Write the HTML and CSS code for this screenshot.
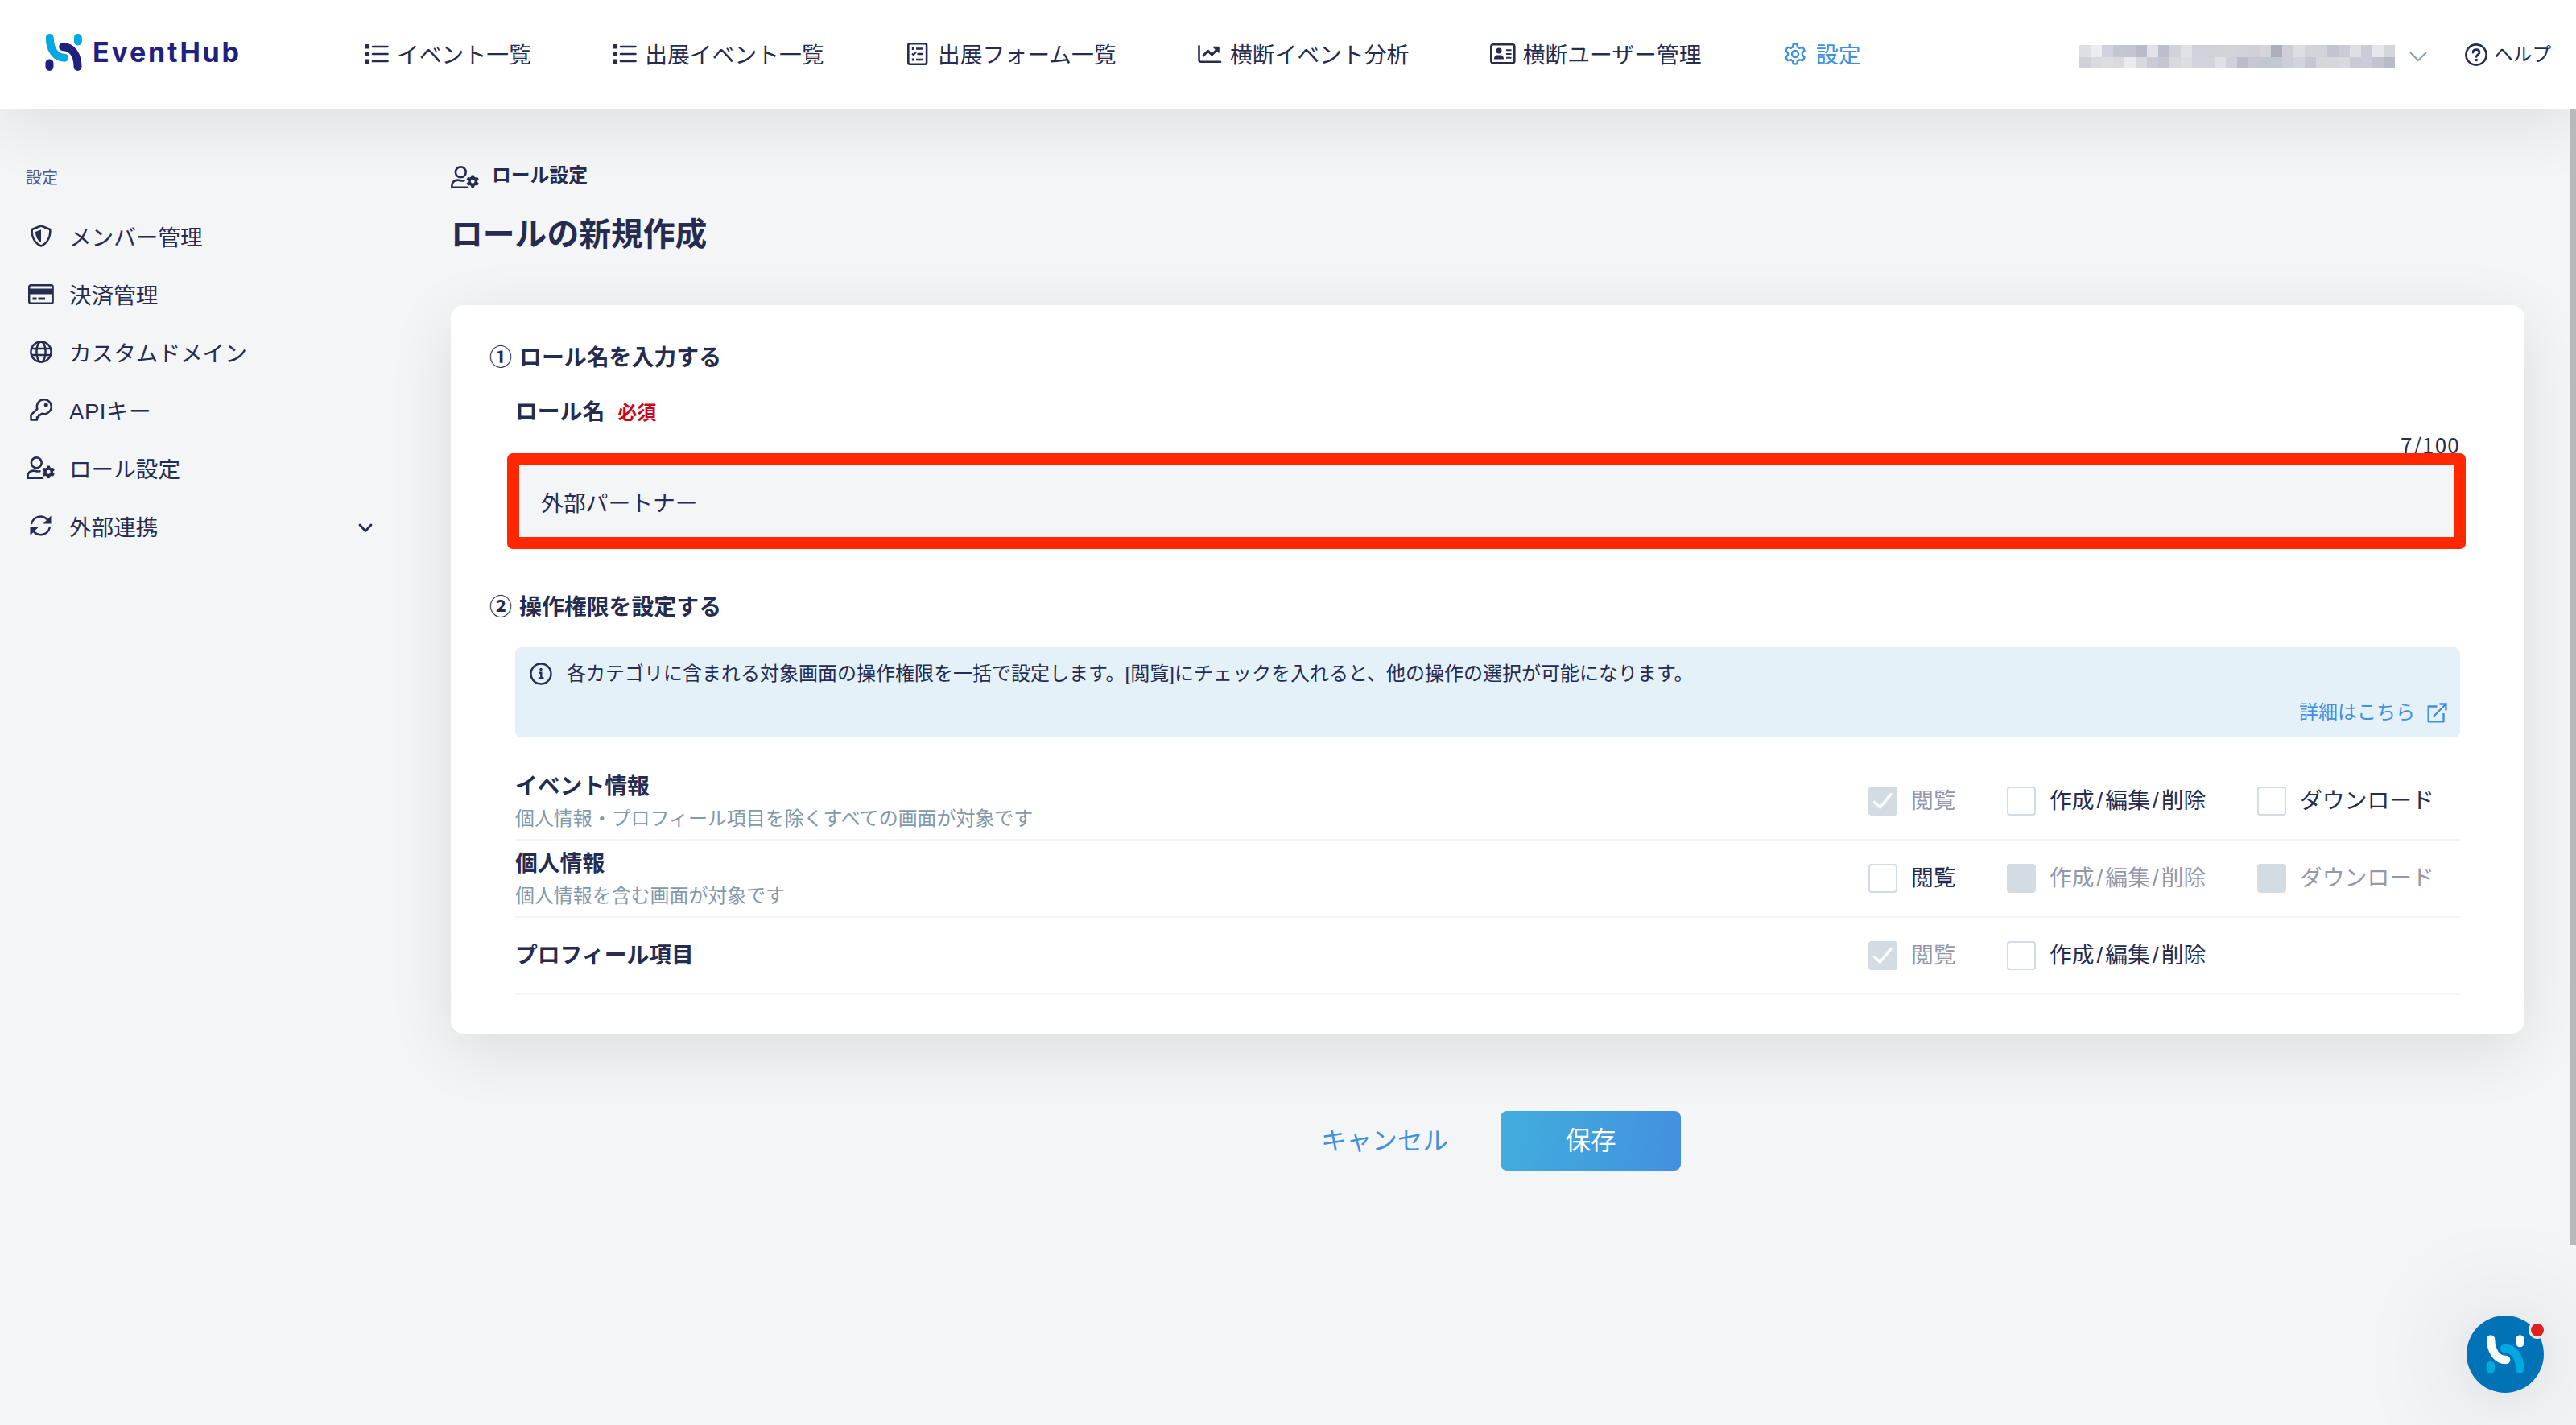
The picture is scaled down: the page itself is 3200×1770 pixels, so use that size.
FILE: index.html
```html
<!DOCTYPE html>
<html lang="ja">

<head>
  <meta charset="UTF-8" />
  <meta name="viewport" content="width=device-width, initial-scale=1.0" />
  <title>ロールの新規作成 - EventHub</title>
  <link rel="stylesheet" href="styles.css">
</head>

<body>
  <!-- shared icons -->
  <svg class="sprite" width="0" height="0">
    <symbol id="gear" viewBox="-20 -20 552 552">
      <path d="M495.9 166.6c3.2 8.7 .5 18.4-6.4 24.6l-43.3 39.4c1.1 8.3 1.7 16.8 1.7 25.4s-.6 17.1-1.7 25.4l43.3 39.4c6.9 6.2 9.6 15.9 6.4 24.6c-4.4 11.9-9.7 23.3-15.8 34.3l-4.7 8.1c-6.6 11-14 21.4-22.1 31.2c-5.9 7.2-15.7 9.6-24.5 6.8l-55.7-17.7c-13.4 10.3-28.2 18.9-44 25.4l-12.5 57.1c-2 9.1-9 16.3-18.2 17.8c-13.8 2.3-28 3.5-42.5 3.5s-28.7-1.2-42.5-3.5c-9.2-1.5-16.2-8.7-18.2-17.8l-12.5-57.1c-15.8-6.5-30.6-15.1-44-25.4L83.1 425.9c-8.8 2.8-18.6 .3-24.5-6.8c-8.1-9.8-15.5-20.2-22.1-31.2l-4.7-8.1c-6.1-11-11.4-22.4-15.8-34.3c-3.2-8.7-.5-18.4 6.4-24.6l43.3-39.4C64.6 273.1 64 264.6 64 256s.6-17.1 1.7-25.4L22.4 191.2c-6.9-6.2-9.6-15.9-6.4-24.6c4.4-11.9 9.7-23.3 15.8-34.3l4.7-8.1c6.6-11 14-21.4 22.1-31.2c5.9-7.2 15.7-9.6 24.5-6.8l55.7 17.7c13.4-10.3 28.2-18.9 44-25.4l12.5-57.1c2-9.1 9-16.3 18.2-17.8C227.3 1.2 241.5 0 256 0s28.7 1.2 42.5 3.5c9.2 1.5 16.2 8.7 18.2 17.8l12.5 57.1c15.8 6.5 30.6 15.1 44 25.4l55.7-17.7c8.8-2.8 18.6-.3 24.5 6.8c8.1 9.8 15.5 20.2 22.1 31.2l4.7 8.1c6.1 11 11.4 22.4 15.8 34.3zM256 336a80 80 0 1 0 0-160 80 80 0 1 0 0 160z" />
    </symbol>
    <symbol id="list" viewBox="0 0 30 24">
      <path d="M0 0h5.500v5.500H0zM0 9.200h5.500v5.500H0zM0 18.500h5.500V24H0z" fill="currentColor" />
      <path d="M10 3h18.500M10 12h18.500M10 21h18.500" stroke="currentColor" stroke-width="2.600" stroke-linecap="round" />
    </symbol>
    <symbol id="user-gear" viewBox="0 0 36 28">
      <g fill="none" stroke="currentColor" stroke-width="2.600" stroke-linecap="round">
        <circle cx="12.300" cy="7.800" r="6.400" />
        <path d="M16.500 18.300C12 19.300 11.500 17.600 8.600 17.600C4.500 17.600 1.400 20.500 1.400 24.500V26.700H20" />
      </g>
      <use href="#gear" x="18.700" y="10.800" width="17" height="17" fill="currentColor" />
    </symbol>
    <symbol id="logo" viewBox="0 0 143 144">
      <g fill="none" stroke-width="31" stroke-linecap="round">
        <path class="logo-a" d="M18 16C18 60 40 93 75 93" />
        <path class="logo-b" d="M69 51C105 51 126 82 126 128" />
        <path class="logo-a" d="M127 16V30" />
        <path class="logo-b" d="M17 114V128" />
      </g>
    </symbol>
  </svg>

  <header>
    <a class="brand" href="#">
      <svg class="brand-mark" width="46" height="48"><use href="#logo" /></svg>
      <span>EventHub</span>
    </a>
    <nav>
      <ul>
        <li><a href="#"><svg width="30" height="24"><use href="#list" /></svg><span>イベント一覧</span></a></li>
        <li><a href="#"><svg width="30" height="24"><use href="#list" /></svg><span>出展イベント一覧</span></a></li>
        <li><a href="#">
          <svg width="26" height="28" viewBox="0 0 26 28" fill="none" stroke="currentColor" stroke-width="2.600">
            <rect x="1.300" y="1.300" width="22.800" height="25.400" rx="2" />
            <path d="M11 7.500h8M12.500 14h6.500M11 21h8" stroke-width="2.400" />
            <path d="M5.800 7.500h3M5.800 21h3" stroke-width="3" />
            <path d="M6 13.500l1.800 1.800 3.200-3.600" stroke-width="2" />
          </svg><span>出展フォーム一覧</span></a></li>
        <li><a href="#">
          <svg width="30" height="22" viewBox="0 0 30 22" fill="none" stroke="currentColor" stroke-width="2.600" stroke-linecap="round" stroke-linejoin="round">
            <path d="M1.500 1.300V18.500Q1.500 20.700 3.700 20.700H28" />
            <path d="M7 13l5.500-6 5 5L25 4.500" stroke-width="3" />
            <path d="M19.500 2.500H26V9z" fill="currentColor" stroke-width="1.500" />
          </svg><span>横断イベント分析</span></a></li>
        <li><a href="#">
          <svg width="32" height="26" viewBox="0 0 32 26" fill="none" stroke="currentColor" stroke-width="2.600">
            <rect x="1.300" y="1.300" width="29" height="23" rx="2.500" />
            <circle cx="11" cy="9" r="3.500" fill="currentColor" stroke="none" />
            <path d="M5 19.500c0-3.500 2-5 4-5h4c2 0 4 1.500 4 5z" fill="currentColor" stroke="none" />
            <path d="M20 8.300h6.500M20 13h6.500M20 17.700h6.500" stroke-width="2" />
          </svg><span>横断ユーザー管理</span></a></li>
        <li><a class="active" href="#">
          <svg width="28" height="28" viewBox="-10 -10 532 532" fill="none" stroke="currentColor" stroke-width="46">
            <path d="M214 24Q256 12 298 24L314 92L362 120L430 100Q464 136 476 182L426 230V282L476 330Q464 376 430 412L362 392L314 420L298 488Q256 500 214 488L198 420L150 392L82 412Q48 376 36 330L86 282V230L36 182Q48 136 82 100L150 120L198 92Z" stroke-linejoin="round" />
            <circle cx="256" cy="256" r="76" />
          </svg><span>設定</span></a></li>
      </ul>
    </nav>
    <div class="account">
      <div class="mosaic" id="mosaic"></div>
      <svg class="caret" width="22" height="12" viewBox="0 0 22 12" fill="none" stroke="currentColor" stroke-width="2"><path d="M1 1l10 10L21 1" /></svg>
    </div>
    <a class="help" href="#">
      <svg width="28" height="28" viewBox="0 0 28 28" fill="none" stroke="currentColor" stroke-width="2.600">
        <circle cx="14" cy="14" r="12.600" />
        <path d="M10 11.200C10 8.500 11.800 7.600 14 7.600C16.400 7.600 18.100 9 18.100 11C18.100 13.600 14.200 13.700 14.200 16.500" stroke-linecap="round" />
        <circle cx="14.200" cy="20.500" r="1.800" fill="currentColor" stroke="none" />
      </svg><span>ヘルプ</span></a>
  </header>

  <div class="layout">
    <aside>
      <p>設定</p>
      <ul>
        <li><a href="#"><i><svg width="28" height="28" viewBox="0 0 28 28" fill="none" stroke="currentColor" stroke-width="2.500" stroke-linejoin="round">
          <path d="M14 1.500L25.300 6C25.800 15 22 23 14 26.500C6 23 2.200 15 2.700 6Z" />
          <path d="M14 6.200V22C9.500 19.500 7 14.500 7 9Z" fill="currentColor" stroke="none" />
        </svg></i><span>メンバー管理</span></a></li>
        <li><a href="#"><i><svg width="32" height="25" viewBox="0 0 32 25" fill="none" stroke="currentColor" stroke-width="2.400">
          <rect x="1.200" y="1.200" width="29.400" height="22.600" rx="2" />
          <path d="M1 5.500h30v7H1z" fill="currentColor" stroke="none" />
          <path d="M5.500 18h5M12.500 18h8.500" stroke-width="3" />
        </svg></i><span>決済管理</span></a></li>
        <li><a href="#"><i><svg width="28" height="28" viewBox="0 0 28 28" fill="none" stroke="currentColor" stroke-width="2.500">
          <circle cx="14" cy="14" r="12.600" />
          <ellipse cx="14" cy="14" rx="5.600" ry="12.600" />
          <path d="M2 10h24M2 18h24" />
        </svg></i><span>カスタムドメイン</span></a></li>
        <li><a href="#"><i><svg width="28" height="28" viewBox="0 0 28 28" fill="none" stroke="currentColor" stroke-width="2.500" stroke-linejoin="round">
          <path d="M9.300 13A9 9 0 1 1 15 18.700L13 20.500H11V23.300H9V26.500H1.500V20.300Z" />
          <circle cx="20.200" cy="8" r="2.500" fill="currentColor" stroke="none" />
        </svg></i><span class="latin">APIキー</span></a></li>
        <li><a href="#"><i><svg width="36" height="28"><use href="#user-gear" /></svg></i><span>ロール設定</span></a></li>
        <li><a href="#"><i><svg width="27" height="26" viewBox="0 0 27 26" fill="none" stroke="currentColor" stroke-width="2.500" stroke-linecap="round">
          <path d="M2.300 10A11.500 11.500 0 0 1 21.500 5M24.700 15.500A11.500 11.500 0 0 1 5.500 20.800" />
          <path d="M26.500 .5V10.500H16.500ZM.5 25V15H10.500Z" fill="currentColor" stroke="none" />
        </svg></i><span>外部連携</span>
          <svg class="chevron" width="18" height="12" viewBox="0 0 18 12" fill="none" stroke="currentColor" stroke-width="2.800" stroke-linecap="round" stroke-linejoin="round"><path d="M2 2l7 7.500L16 2" /></svg></a></li>
      </ul>
    </aside>

    <main>
      <div class="breadcrumb">
        <svg width="36" height="28"><use href="#user-gear" /></svg>
        <span>ロール設定</span>
      </div>
      <h1>ロールの新規作成</h1>

      <form id="roleForm">
        <h2><span class="num">①</span>ロール名を入力する</h2>
        <div class="section">
          <div class="label">ロール名<em>必須</em></div>
          <div class="count">7/100</div>
          <div class="field"><span>外部パートナー</span></div>
        </div>

        <h2 class="second"><span class="num">②</span>操作権限を設定する</h2>
        <div class="section">
          <div class="info">
            <div class="info-text">
              <svg width="28" height="28" viewBox="0 0 28 28" fill="none" stroke="currentColor" stroke-width="2.400">
                <circle cx="14" cy="14" r="12.500" />
                <path d="M11.500 12.700H14.300V19M10.800 19.500H17.500" />
                <circle cx="14" cy="8.500" r="1.700" fill="currentColor" stroke="none" />
              </svg>
              <span>各カテゴリに含まれる対象画面の操作権限を一括で設定します。[閲覧]にチェックを入れると、他の操作の選択が可能になります。</span>
            </div>
            <a class="more" href="#">詳細はこちら
              <svg width="25" height="25" viewBox="0 0 25 25" fill="none" stroke="currentColor" stroke-width="2.400">
                <path d="M12.500 4.500H1.700V23.300H20.500V13" stroke-linejoin="round" />
                <path d="M8 17L22.500 2.500M15.500 1.500H23.500V9.500" />
              </svg></a>
          </div>

          <div class="row">
            <div class="name"><b>イベント情報</b><small>個人情報・プロフィール項目を除くすべての画面が対象です</small></div>
            <div class="check off"><span class="box checked"><svg width="26" height="22" viewBox="0 0 26 22"><path d="M2.500 12.500L9.500 19L23 2.500" /></svg></span>閲覧</div>
            <div class="check"><span class="box"></span>作成<s>/</s>編集<s>/</s>削除</div>
            <div class="check"><span class="box"></span>ダウンロード</div>
          </div>
          <div class="row">
            <div class="name"><b>個人情報</b><small>個人情報を含む画面が対象です</small></div>
            <div class="check"><span class="box"></span>閲覧</div>
            <div class="check off"><span class="box"></span>作成<s>/</s>編集<s>/</s>削除</div>
            <div class="check off"><span class="box"></span>ダウンロード</div>
          </div>
          <div class="row">
            <div class="name"><b>プロフィール項目</b></div>
            <div class="check off"><span class="box checked"><svg width="26" height="22" viewBox="0 0 26 22"><path d="M2.500 12.500L9.500 19L23 2.500" /></svg></span>閲覧</div>
            <div class="check"><span class="box"></span>作成<s>/</s>編集<s>/</s>削除</div>
          </div>
        </div>
      </form>

      <div class="actions">
        <a class="cancel" href="#">キャンセル</a>
        <button class="save" type="submit" form="roleForm">保存</button>
      </div>
    </main>
  </div>

  <div class="scrollbar"></div>
  <div class="chat">
    <svg width="48" height="48"><use href="#logo" /></svg>
    <span class="dot"></span>
  </div>

  <script>
    // masked account name, two rows of 28 cells
    const cells = [
      'dedfe4 ececf0 d0d1dc c4c6d0 c3c6d0 babbc8 e2e2e8 bcbecb d0d2dc e0e1e7 d1d2d9 d1d2d9 d2d3d9 d3d4da d1d2da cfd0d8 d5d6dc acaebb cdced6 dddee3 d3d3da d3d3da c2c5ce cbccd5 dedfe5 cbccd6 e6e6ec d5d6dc',
      'cfd0d8 d9dae0 dddee4 dad9de eaeaef d8d9df cacbd5 c6c6d2 d8d9df dddde4 d3d4db d3d4db e0e1e7 cfd0da bbbbc9 c6c7d2 c3c7d0 c3c7d0 cdced8 d2d4dc c6c7d1 d6d7dd d6d7dd d9dadf c8c9d4 cbccd6 c3c4cf b8bac8'
    ].join(' ').split(' ');
    document.getElementById('mosaic').innerHTML =
      cells.map(c => `<span style="background:#${c}"></span>`).join('');
  </script>
</body>

</html>
```

FILE: styles.css
```css
* {
  box-sizing: border-box;
}

body {
  margin: 0;
  height: 1770px;
  overflow: hidden;
  font-family: "Liberation Sans", "Noto Sans CJK JP", sans-serif;
  font-size: 27.8px;
  line-height: 36px;
  color: #252c50;
  background: #f4f5f7;
}

a {
  color: inherit;
  text-decoration: none;
}

ul {
  list-style: none;
  margin: 0;
  padding: 0;
}

svg {
  display: block;
  flex: none;
}

.sprite {
  position: absolute;
}

header {
  position: relative;
  display: flex;
  align-items: center;
  height: 136px;
  padding-left: 56px;
  background: #fff;
  box-shadow: 0 20px 80px rgba(0, 0, 0, 0.09);
  white-space: nowrap;
}

.brand {
  display: flex;
  align-items: center;
  gap: 13px;
  width: 395px;
  height: 48px;
  margin-bottom: 6px;
  font-family: Inter, sans-serif;
  font-size: 34px;
  font-weight: 700;
  letter-spacing: 2.8px;
  color: #1f2080;
}

.logo-a {
  stroke: var(--mark-a);
}

.logo-b {
  stroke: var(--mark-b);
}

.brand-mark {
  --mark-a: #00a9e0;
  --mark-b: #1f2080;
}

nav ul {
  display: flex;
  gap: 99.4px;
}

nav a {
  display: flex;
  align-items: center;
  padding-left: 1px;
  padding-top: 2px;
}

nav svg {
  width: 32px;
  margin-right: 9px;
  margin-top: -5px;
}

nav .active {
  color: #4090de;
}

nav .active span {
  margin-left: 1px;
}

.account {
  display: flex;
  align-items: center;
  gap: 18px;
  margin-left: auto;
}

.mosaic {
  display: grid;
  grid-template-columns: repeat(28, 14px);
  grid-auto-rows: 14.5px;
  margin-top: 5px;
}

.caret {
  margin-top: 3px;
  color: #8a9dae;
}

.help {
  display: flex;
  align-items: center;
  gap: 8px;
  margin: 0 31px 0 47px;
  font-size: 23.6px;
}

.layout {
  display: flex;
}

aside {
  width: 560px;
  padding: 73px 0 0 32px;
}

aside p {
  margin: 0 0 27px;
  font-size: 20px;
  line-height: 24px;
  color: #4b5c8f;
}

aside a {
  display: flex;
  align-items: center;
  width: 431px;
  height: 72px;
  font-size: 27.6px;
}

aside i {
  display: flex;
  justify-content: center;
  width: 39px;
  margin-left: -1px;
  margin-right: 16px;
  margin-top: -6px;
}

.latin {
  letter-spacing: 0.5px;
}

.chevron {
  margin-left: auto;
}

main {
  flex: 1;
  padding: 64px 64px 0 0;
}

.breadcrumb {
  display: flex;
  align-items: center;
  gap: 15px;
  height: 36px;
  font-size: 23.8px;
  font-weight: bold;
}

.breadcrumb svg {
  margin-top: 4px;
}

h1 {
  margin: 25px 0 58px;
  font-size: 39.8px;
  line-height: 60px;
}

form {
  padding: 48px 80px 48px 48px;
  background: #fff;
  border-radius: 16px;
  box-shadow: 0 20px 80px rgba(0, 0, 0, 0.1);
}

h2 {
  height: 36px;
  margin: 0 0 31px;
  font-size: 27.9px;
  line-height: 36px;
}

h2.second {
  margin-top: 60px;
}

.num {
  display: inline-block;
  width: 37px;
}

.section {
  margin-left: 32px;
}

.label {
  height: 36px;
  font-weight: bold;
}

.label em {
  margin-left: 16px;
  font-size: 24px;
  font-style: normal;
  color: #d0021b;
}

.count {
  height: 43px;
  padding-top: 4px;
  text-align: right;
  font-family: "Noto Sans CJK JP", sans-serif;
  font-size: 26px;
  letter-spacing: 1.2px;
}

.field {
  position: relative;
  display: flex;
  align-items: center;
  height: 104px;
  padding: 2px 32px 0;
  background: #f4f5f7;
  border-radius: 8px;
}

/* red highlight around the input */
.field::after {
  content: "";
  position: absolute;
  inset: -10px -7px -5px -10px;
  border: 15px solid #ff2800;
  border-radius: 7px;
}

.info {
  height: 112px;
  margin-bottom: 32px;
  padding: 15px 16px 0 18px;
  border-radius: 8px;
  background: #e4f1f9;
  font-size: 24px;
}

.info-text {
  display: flex;
  align-items: center;
  gap: 18px;
}

.more {
  display: flex;
  align-items: center;
  justify-content: flex-end;
  gap: 15px;
  margin-top: 12px;
  color: #4090de;
}

.row {
  display: grid;
  grid-template-columns: 1681px 172px 311px 252px;
  align-items: center;
  height: 96px;
  border-bottom: 2px solid #f4f5f7;
}

.name b,
.name small {
  display: block;
}

.name b {
  line-height: 44px;
}

.name small {
  font-size: 23.95px;
  color: #8398ab;
}

.check {
  display: flex;
  align-items: center;
}

.check s {
  padding: 0 3px;
  text-decoration: none;
}

.box {
  display: flex;
  align-items: center;
  justify-content: center;
  width: 36px;
  height: 36px;
  margin-right: 17px;
  border: 2px solid #d3dbe3;
  border-radius: 4px;
}

.box path {
  fill: none;
  stroke: #fff;
  stroke-width: 3.5;
  stroke-linecap: round;
  stroke-linejoin: round;
}

.off {
  color: #9597aa;
}

.off .box {
  background: #d3dbe3;
}

.actions {
  display: flex;
  justify-content: center;
  gap: 32px;
  margin-top: 96px;
  font-size: 31.6px;
}

.cancel,
.save {
  width: 224px;
  height: 74px;
  line-height: 74px;
  text-align: center;
}

.cancel {
  color: #4090de;
}

.save {
  padding: 0;
  border: none;
  border-radius: 8px;
  font-family: inherit;
  font-size: inherit;
  color: #fff;
  background: linear-gradient(100deg, #42aedd, #4290df);
}

.scrollbar {
  position: absolute;
  top: 136px;
  right: 0;
  width: 8px;
  height: 1410px;
  background: #b8b9bb;
}

.chat {
  position: absolute;
  top: 1634px;
  left: 3064px;
  display: flex;
  align-items: center;
  justify-content: center;
  width: 96px;
  height: 96px;
  border-radius: 50%;
  background: #0073b7;
  box-shadow: 0 4px 40px rgba(0, 0, 0, 0.04), 0 4px 140px 10px rgba(0, 0, 0, 0.13);
  --mark-a: #fff;
  --mark-b: #00a9e0;
}

.dot {
  position: absolute;
  top: 7px;
  right: -3px;
  width: 22px;
  height: 22px;
  border: 3px solid #e9eaec;
  border-radius: 50%;
  background: #e02020;
}
```
